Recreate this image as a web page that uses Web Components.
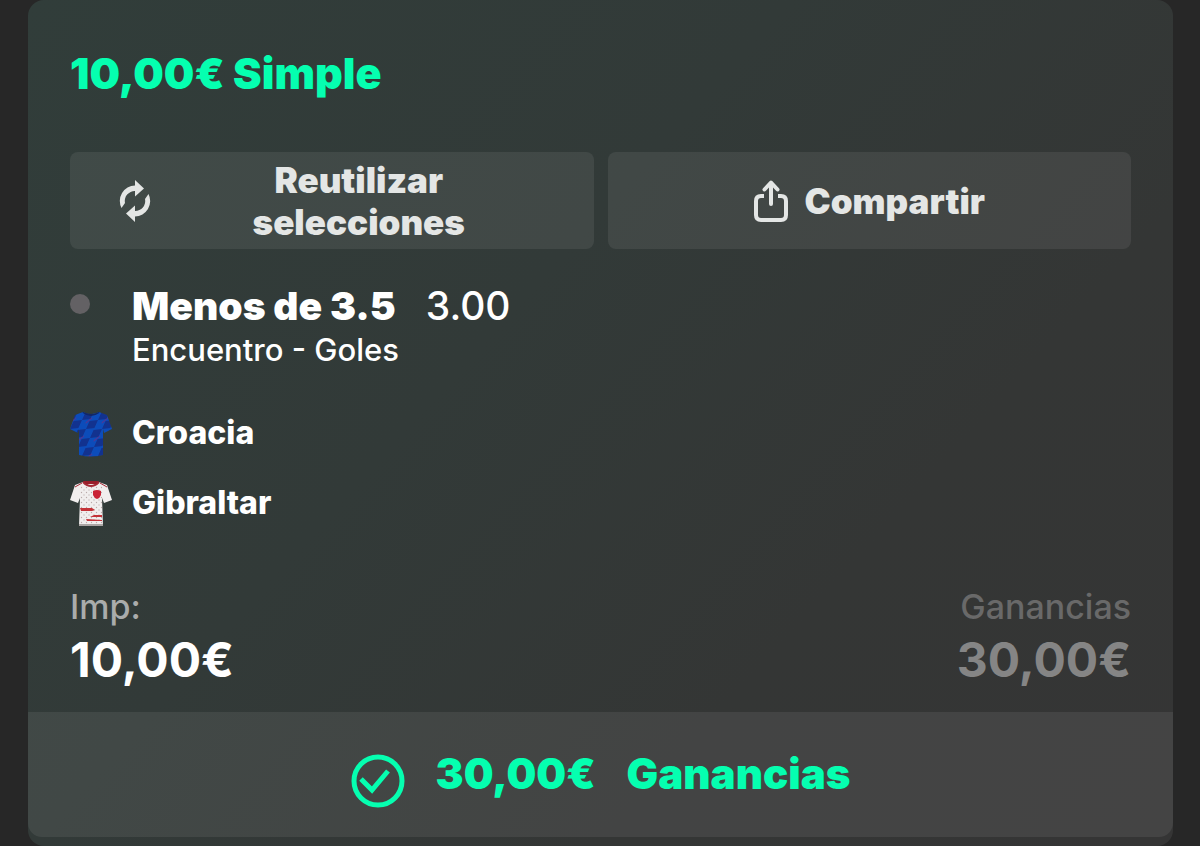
<!DOCTYPE html>
<html lang="es">
<head>
<meta charset="utf-8">
<meta name="viewport" content="width=device-width, initial-scale=1">
<title>Apuesta simple</title>
<style>
  body {
    margin: 0;
    background: #272727;
    color: #fff;
    font-family: Inter, "Liberation Sans", sans-serif;
  }
</style>
</head>
<body>
<bet-card>
  <h1 slot="title">10,00€ Simple</h1>
  <bet-button slot="actions" wide>
    <svg slot="icon" width="32" height="42" viewBox="0 0 32 42" fill="#e4e6e5" aria-hidden="true">
      <path d="M16 0 L25 8.500 L16 16.500 V11 A10 10 0 0 0 6 23 L2.500 28 A15.500 15.500 0 0 1 16 5.500 Z"/>
      <path d="M16 42 L7 33.500 L16 25.500 V31 A10 10 0 0 0 26 19 L29.500 14 A15.500 15.500 0 0 1 16 36.500 Z"/>
    </svg>
    Reutilizar selecciones
  </bet-button>
  <bet-button slot="actions">
    <svg slot="icon" width="34" height="42" viewBox="0 0 34 42" fill="none" stroke="#e4e6e5" stroke-width="4" stroke-linecap="round" stroke-linejoin="round" aria-hidden="true">
      <path d="M10 16 H7 Q2 16 2 21 V35 Q2 40 7 40 H27 Q32 40 32 35 V21 Q32 16 27 16 H24" stroke-linecap="butt"/>
      <path d="M17 24 V3 M10.500 9.500 L17 2.500 L23.500 9.500"/>
    </svg>
    Compartir
  </bet-button>
  <bet-selection odds="3.00" market="Encuentro - Goles">Menos de 3.5</bet-selection>
  <bet-team>
    <svg slot="shirt" width="42" height="46" viewBox="0 0 42 46" aria-hidden="true">
      <defs>
        <clipPath id="blue"><path d="M13 1 Q21 5 29 1 L37 4 L42 18 L34 22 L33 18 V44 Q21 47 9 44 V18 L8 22 L0 18 L5 4 Z"/></clipPath>
        <pattern id="checks" width="16" height="18" patternUnits="userSpaceOnUse" patternTransform="skewX(-24)">
          <path fill="#0c4cba" d="M0 0h16v18H0z"/>
          <path fill="#12328f" d="M0 1 8 0v8L0 9zM8 10l8-1v8l-8 1z"/>
          <path stroke="#6a2c86" d="M5 12 9 7"/>
        </pattern>
      </defs>
      <g clip-path="url(#blue)">
        <path fill="url(#checks)" d="M0 0h42v46H0z"/>
        <path fill="none" stroke="#122766" stroke-width="2" d="M13 1 Q21 7 29 1"/>
      </g>
    </svg>
    Croacia
  </bet-team>
  <bet-team>
    <svg slot="shirt" width="42" height="46" viewBox="0 0 42 46" aria-hidden="true">
      <defs>
        <pattern id="dots" width="5" height="5" patternUnits="userSpaceOnUse">
          <circle cx="1.500" cy="1.500" r=".7" fill="#b9aaa9"/>
          <circle cx="4" cy="4" r=".7" fill="#c1b7b6"/>
        </pattern>
      </defs>
      <path fill="#f1eeee" d="M13 1 Q21 4 29 1 L37 4 L42 19 L34 22 L32 17 L33 45 H9 L10 17 L8 22 L0 19 L5 4 Z"/>
      <path fill="url(#dots)" d="M10 5h22v40H10z"/>
      <path fill="none" stroke="#a52a36" stroke-width="2" d="M13 1 Q21 9 29 1"/>
      <path fill="none" stroke="#a52a36" d="M12 2 5 6 M30 2 37 6"/>
      <path fill="#981e2b" d="M13 0h16l-3 3H16z"/>
      <path fill="#c92236" d="M23 10 Q27 8 31 10 V14 Q30 17 27 18 Q24 17 23 14 Z"/>
      <path fill="#c43238" d="M10 27h12l3 2-3 1H11zM24 34h8v2H20zM16 38l16 1v1H17z"/>
      <path fill="#aaa5a4" d="M9 43h24v2H9z"/>
    </svg>
    Gibraltar
  </bet-team>
  <bet-amount slot="stake" label="Imp:">10,00€</bet-amount>
  <bet-amount slot="returns" label="Ganancias" muted>30,00€</bet-amount>
  <bet-result slot="result" label="Ganancias">30,00€</bet-result>
</bet-card>

<script>
class BetCard extends HTMLElement {
  constructor() {
    super();
    this.attachShadow({ mode: 'open' });
    this.shadowRoot.innerHTML = `
      <style>
        :host {
          display: block;
          margin: 0 27px 0 28px;
          border-radius: 16px;
          background: linear-gradient(132deg, #313d3a 0%, #323a38 40%, #343635 70%, #353535 100%);
        }
        main {
          padding: 48px 42px 20px;
        }
        ::slotted(h1) {
          margin: 0;
          color: #05ffb0;
          font-size: 43px;
          font-weight: 900;
          line-height: 50px;
        }
        #actions {
          display: grid;
          grid-template-columns: 1fr 1fr;
          gap: 14px;
          margin: 54px 0 34px;
        }
        #totals {
          display: flex;
          justify-content: space-between;
          margin-top: 47px;
        }
        footer {
          background: rgba(255,255,255,0.075);
          border-radius: 0 0 14px 14px;
        }
        #edge {
          height: 9px;
        }
      </style>
      <main>
        <slot name="title"></slot>
        <div id="actions"><slot name="actions"></slot></div>
        <slot></slot>
        <div id="totals">
          <slot name="stake"></slot>
          <slot name="returns"></slot>
        </div>
      </main>
      <footer><slot name="result"></slot></footer>
      <div id="edge"></div>
    `;
  }
}

class BetButton extends HTMLElement {
  constructor() {
    super();
    this.attachShadow({ mode: 'open' });
    this.shadowRoot.innerHTML = `
      <style>
        :host {
          display: block;
        }
        button {
          display: flex;
          align-items: center;
          justify-content: center;
          gap: 17px;
          width: 100%;
          height: 97px;
          padding: 0;
          border: 0;
          border-radius: 8px;
          background: rgba(255,255,255,0.075);
          color: #e4e6e5;
          font: 900 35px/42px Inter, "Liberation Sans", sans-serif;
          cursor: pointer;
        }
        :host([wide]) button {
          padding: 0 44px 0 49px;
        }
        :host([wide]) span {
          flex: 1;
          padding: 0 40px;
        }
        ::slotted(svg) {
          display: block;
          flex: none;
        }
      </style>
      <button type="button"><slot name="icon"></slot><span><slot></slot></span></button>
    `;
  }
}

class BetSelection extends HTMLElement {
  constructor() {
    super();
    this.attachShadow({ mode: 'open' });
    this.shadowRoot.innerHTML = `
      <style>
        :host {
          display: grid;
          grid-template-columns: 62px 1fr;
          margin-bottom: 28px;
        }
        #dot {
          width: 20px;
          height: 20px;
          margin-top: 11px;
          border-radius: 50%;
          background: #636164;
        }
        #pick {
          display: flex;
          gap: 30px;
          font-size: 39px;
          font-weight: 500;
          line-height: 46px;
        }
        b {
          font-weight: 900;
        }
        #market {
          font-size: 31px;
          font-weight: 500;
          line-height: 42px;
        }
      </style>
      <div id="dot"></div>
      <div>
        <div id="pick"><b><slot></slot></b><span id="odds"></span></div>
        <div id="market"></div>
      </div>
    `;
    this.shadowRoot.querySelector('#odds').textContent = this.getAttribute('odds');
    this.shadowRoot.querySelector('#market').textContent = this.getAttribute('market');
  }
}

class BetTeam extends HTMLElement {
  constructor() {
    super();
    this.attachShadow({ mode: 'open' });
    this.shadowRoot.innerHTML = `
      <style>
        :host {
          display: grid;
          grid-template-columns: 42px 1fr;
          gap: 20px;
          padding: 12px 0;
          font-size: 32px;
          font-weight: 800;
          line-height: 44px;
        }
        ::slotted(svg) {
          display: block;
        }
      </style>
      <slot name="shirt"></slot>
      <span><slot></slot></span>
    `;
  }
}

class BetAmount extends HTMLElement {
  constructor() {
    super();
    this.attachShadow({ mode: 'open' });
    this.shadowRoot.innerHTML = `
      <style>
        :host {
          display: block;
        }
        #label {
          color: #aaacab;
          font-size: 34px;
          font-weight: 500;
          line-height: 42px;
        }
        #value {
          font-size: 48px;
          font-weight: 700;
          line-height: 64px;
        }
        :host([muted]) {
          text-align: right;
        }
        :host([muted]) #label {
          color: #696969;
        }
        :host([muted]) #value {
          color: #858585;
        }
      </style>
      <div id="label"></div>
      <div id="value"><slot></slot></div>
    `;
    this.shadowRoot.querySelector('#label').textContent = this.getAttribute('label');
  }
}

class BetResult extends HTMLElement {
  constructor() {
    super();
    this.attachShadow({ mode: 'open' });
    this.shadowRoot.innerHTML = `
      <style>
        :host {
          display: flex;
          align-items: center;
          justify-content: center;
          gap: 31px;
          height: 123px;
          padding-bottom: 2px;
          color: #05ffb0;
          font-size: 42px;
          font-weight: 900;
          line-height: 50px;
        }
        svg {
          display: block;
          margin-top: 14px;
        }
      </style>
      <svg width="54" height="54" viewBox="0 0 54 54" fill="none" stroke="#05ffb0" stroke-width="5" aria-hidden="true">
        <circle cx="27" cy="27" r="24"/>
        <path d="M10 25 L21 36 L37 17"/>
      </svg>
      <span><slot></slot></span>
      <span id="label"></span>
    `;
    this.shadowRoot.querySelector('#label').textContent = this.getAttribute('label');
  }
}

customElements.define('bet-card', BetCard);
customElements.define('bet-button', BetButton);
customElements.define('bet-selection', BetSelection);
customElements.define('bet-team', BetTeam);
customElements.define('bet-amount', BetAmount);
customElements.define('bet-result', BetResult);
</script>
</body>
</html>
